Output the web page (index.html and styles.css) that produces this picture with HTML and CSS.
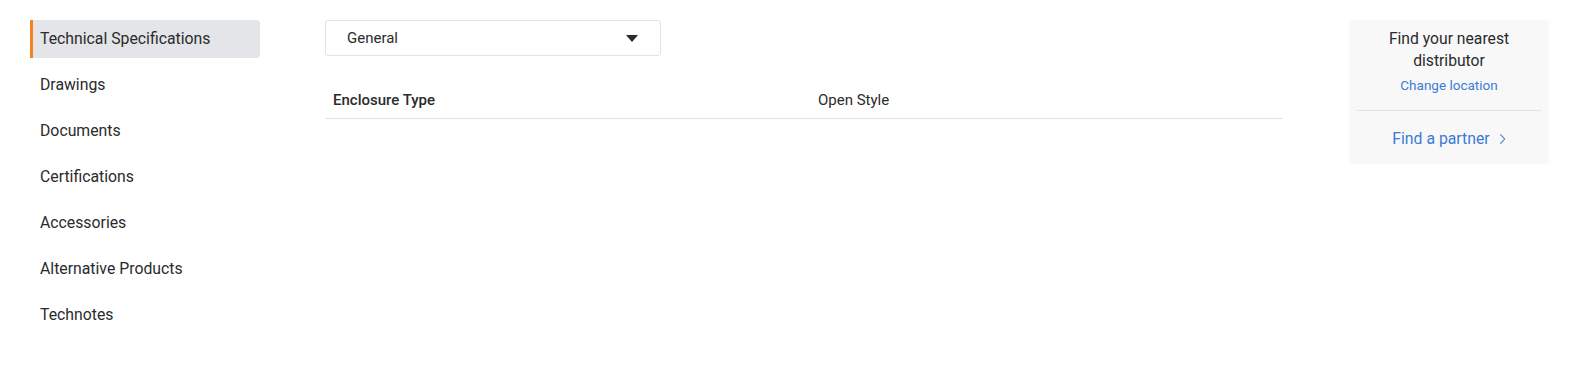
FILE: index.html
```html
<!DOCTYPE html>
<html lang="en">
<head>
    <meta charset="UTF-8">
    <meta name="viewport" content="width=device-width, initial-scale=1.0">
    <title>Product Details</title>
    <link rel="stylesheet" href="styles.css">
</head>
<body>
    <div class="page">
        <nav class="side-nav">
            <a class="nav-item active" href="#">Technical Specifications</a>
            <a class="nav-item" href="#">Drawings</a>
            <a class="nav-item" href="#">Documents</a>
            <a class="nav-item" href="#">Certifications</a>
            <a class="nav-item" href="#">Accessories</a>
            <a class="nav-item" href="#">Alternative Products</a>
            <a class="nav-item" href="#">Technotes</a>
        </nav>

        <div class="specs">
            <div class="select">
                <span>General</span>
                <span class="caret"></span>
            </div>

            <div class="spec-table">
                <div class="spec-row">
                    <div class="spec-name">Enclosure Type</div>
                    <div class="spec-value">Open Style</div>
                </div>
            </div>
        </div>

        <aside class="distributor">
            <div class="distributor-title">Find your nearest distributor</div>
            <a class="change-location" href="#">Change location</a>
            <div class="divider"></div>
            <a class="partner-link" href="#">
                Find a partner
                <svg viewBox="0 0 8 14" fill="none" stroke="currentColor" stroke-width="1.2">
                    <path d="M1.5 1.5 L6.5 7 L1.5 12.5" />
                </svg>
            </a>
        </aside>
    </div>
</body>
</html>
```

FILE: styles.css
```css
:root {
    --text-color: #2b2b2b;
    --link-color: #3a7bd5;
    --accent-color: #f58220;
    --border-color: #e3e3e3;
}

* {
    margin: 0;
    padding: 0;
    box-sizing: border-box;
}

body {
    font-family: Roboto, "Liberation Sans", sans-serif;
    color: var(--text-color);
    background: white;
    font-size: 15px;
}

a {
    text-decoration: none;
}

.page {
    display: flex;
    align-items: flex-start;
    padding: 20px 35px 0 30px;
}

.side-nav {
    width: 230px;
    display: flex;
    flex-direction: column;
    gap: 8px;
}

.nav-item {
    display: block;
    height: 38px;
    line-height: 38px;
    padding-left: 7px;
    font-size: 15.8px;
    color: var(--text-color);
    border-left: 3px solid transparent;
    border-radius: 0 4px 4px 0;
}

.nav-item.active {
    background-color: #e4e5e9;
    border-left-color: var(--accent-color);
}

.specs {
    width: 958px;
    margin-left: 65px;
}

.select {
    width: 336px;
    height: 36px;
    display: flex;
    align-items: center;
    justify-content: space-between;
    padding: 0 22px 0 21px;
    border: 1px solid var(--border-color);
    border-radius: 3px;
    font-size: 15px;
}

.caret {
    width: 0;
    height: 0;
    border-left: 6px solid transparent;
    border-right: 6px solid transparent;
    border-top: 7px solid #2b2b2b;
}

.spec-table {
    margin-top: 26px;
}

.spec-row {
    display: grid;
    grid-template-columns: 485px 1fr;
    height: 37px;
    align-items: center;
    padding-left: 8px;
    border-bottom: 1px solid var(--border-color);
    font-size: 15px;
}

.spec-name {
    font-weight: 500;
}

.distributor {
    width: 200px;
    margin-left: auto;
    background-color: #f8f8f9;
    border-radius: 4px;
    padding: 8px 8px 15px;
    text-align: center;
}

.distributor-title {
    line-height: 22px;
    font-size: 15.7px;
    padding: 0 16px;
}

.change-location {
    display: block;
    margin-top: 4px;
    font-size: 13.5px;
    line-height: 18px;
    color: var(--link-color);
}

.divider {
    height: 1px;
    background-color: #e2e3e8;
    margin: 16px 0 0;
}

.partner-link {
    display: inline-flex;
    align-items: center;
    gap: 9px;
    margin-top: 18px;
    line-height: 20px;
    color: var(--link-color);
    font-size: 15.8px;
}

.partner-link svg {
    width: 7px;
    height: 12px;
}
```
